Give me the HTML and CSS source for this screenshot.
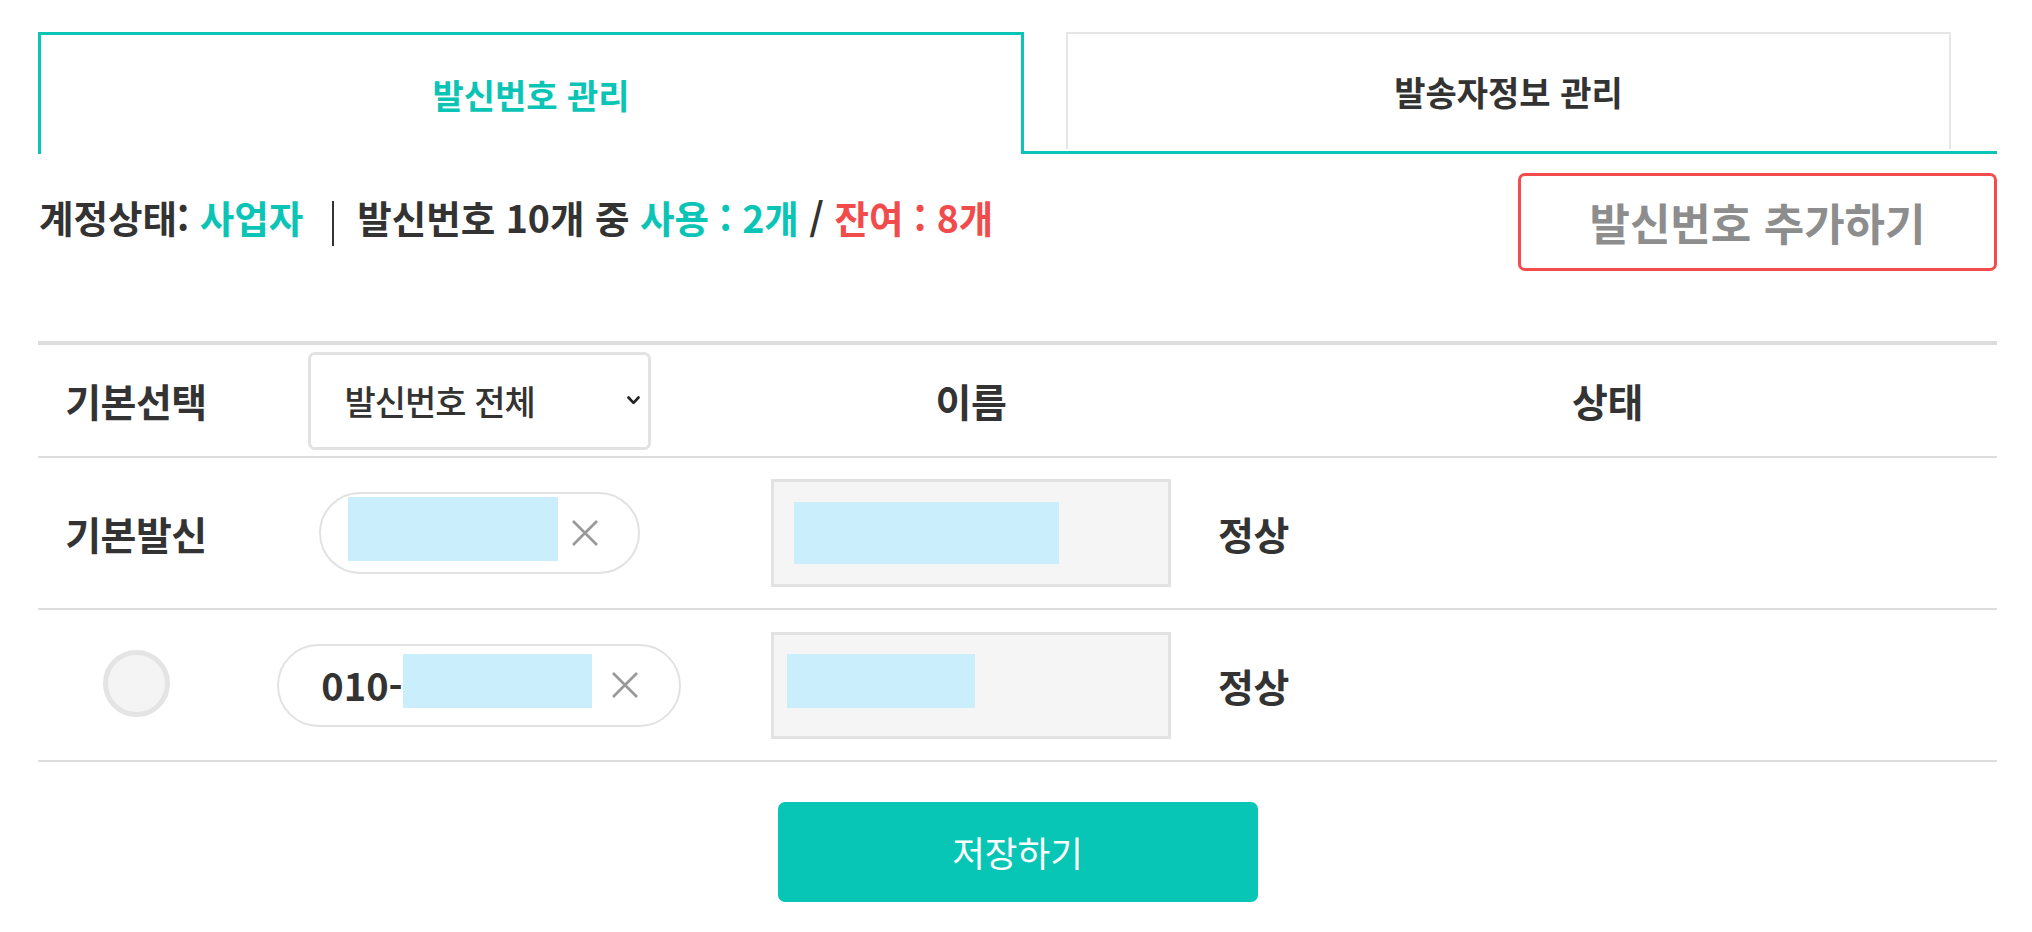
FILE: index.html
```html
<!DOCTYPE html>
<html lang="ko">
<head>
<meta charset="utf-8">
<title>발신번호 관리</title>
<link rel="stylesheet" href="styles.css">
</head>
<body>
<div class="page">
  <nav class="tabs">
    <a class="tab tab--active" href="#">발신번호 관리</a>
    <div class="tab-rest">
      <a class="tab tab--inactive" href="#">발송자정보 관리</a>
    </div>
  </nav>

  <div class="status-bar">
    <p class="status"><span>계정상태: </span><span class="teal">사업자</span><span class="sep"></span><span>발신번호 10개 중 </span><span class="teal">사용 : 2개</span><span> / </span><span class="red">잔여 : 8개</span></p>
    <button class="add-btn" type="button">발신번호 추가하기</button>
  </div>

  <div class="list">
    <div class="list-row list-row--head">
      <div class="cell"><span class="label">기본선택</span></div>
      <div class="cell">
        <div class="select-wrap">
          <select class="select"><option>발신번호 전체</option></select>
          <svg class="chevron" width="13" height="9" viewBox="0 0 13 9"><path d="M1.5 1.5 L6.5 6.8 L11.5 1.5" fill="none" stroke="#222" stroke-width="2.6" stroke-linecap="round" stroke-linejoin="round"/></svg>
        </div>
      </div>
      <div class="cell"><span class="label">이름</span></div>
      <div class="cell"><span class="label">상태</span></div>
    </div>

    <div class="list-row list-row--body">
      <div class="cell"><span class="label">기본발신</span></div>
      <div class="cell">
        <div class="pill pill--a">
          <span class="redact redact--pa" style="width:210px;height:64px"></span>
          <svg class="pill-x" width="28" height="28" viewBox="0 0 28 28"><path d="M2 2 L26 26 M26 2 L2 26" stroke="#999" stroke-width="2.7"/></svg>
        </div>
      </div>
      <div class="cell">
        <div class="name-box name-box--a"><span class="redact" style="width:265px;height:62px"></span></div>
      </div>
      <div class="cell cell--state"><span class="label">정상</span></div>
    </div>

    <div class="list-row list-row--body">
      <div class="cell"><input class="radio" type="radio" name="default"></div>
      <div class="cell">
        <div class="pill pill--b">
          <span class="phone">010-</span>
          <span class="redact redact--pb" style="width:189px;height:54px"></span>
          <svg class="pill-x pill-x--b" width="28" height="28" viewBox="0 0 28 28"><path d="M2 2 L26 26 M26 2 L2 26" stroke="#999" stroke-width="2.7"/></svg>
        </div>
      </div>
      <div class="cell">
        <div class="name-box name-box--b"><span class="redact" style="width:188px;height:54px"></span></div>
      </div>
      <div class="cell cell--state"><span class="label">정상</span></div>
    </div>
  </div>

  <button class="save-btn" type="button">저장하기</button>
</div>
</body>
</html>
```

FILE: styles.css
```css
* { box-sizing: border-box; }

html, body {
  margin: 0;
  padding: 0;
  background: #fff;
}

body {
  font-family: "Noto Sans CJK KR", "Noto Sans", sans-serif;
  color: #333;
}

.page {
  width: 1959px;
  margin-left: 38px;
  padding-top: 32px;
}

/* Tabs */
.tabs {
  display: flex;
  height: 122px;
}

.tab {
  display: flex;
  align-items: center;
  justify-content: center;
  font-size: 34px;
  font-weight: 700;
  letter-spacing: 0;
  line-height: 1;
  text-decoration: none;
}

.tab--active {
  width: 986px;
  border: 3px solid #0ac4b5;
  border-bottom: none;
  color: #0ac4b5;
}

.tab-rest {
  flex: 1;
  display: flex;
  border-bottom: 3px solid #0ac4b5;
  padding: 0 46px 2px 42px;
}

.tab--inactive {
  flex: 1;
  border: 2px solid #e6e6e6;
  border-bottom: none;
  color: #333;
}

/* Status bar */
.status-bar {
  display: flex;
  justify-content: space-between;
  align-items: center;
  height: 98px;
  margin-top: 19px;
}

.status {
  margin: 0 0 0 1px;
  font-size: 37.5px;
  font-weight: 700;
  letter-spacing: 0;
  line-height: 1;
  white-space: pre;
}

.teal { color: #0ac4b5; }
.red { color: #f24b4b; }

.sep {
  display: inline-block;
  width: 2px;
  height: 45px;
  background: #333;
  margin: 0 23px 0 29px;
  vertical-align: middle;
}

.add-btn {
  width: 479px;
  height: 98px;
  padding: 0;
  border: 3px solid #f44c4c;
  border-radius: 7px;
  background: #fff;
  color: #8d8d8d;
  font-family: "Noto Sans CJK KR", "Noto Sans", sans-serif;
  font-size: 44px;
  font-weight: 700;
  letter-spacing: 0;
  line-height: 1;
}

/* List */
.list {
  margin-top: 70px;
  border-top: 4px solid #dddddd;
}

.list-row {
  display: grid;
  grid-template-columns: 196px 490px 494px 1fr;
  align-items: center;
  border-bottom: 2px solid #dddddd;
}

.list-row--head { height: 113px; }
.list-row--body { height: 152px; }

.cell {
  display: flex;
  justify-content: center;
  align-items: center;
}

.cell--state { justify-content: flex-start; }

.label {
  font-size: 39px;
  font-weight: 700;
  letter-spacing: -0.5px;
  line-height: 1;
  color: #333;
}

/* Select */
.select-wrap {
  position: relative;
  width: 343px;
  height: 98px;
}

.select {
  -webkit-appearance: none;
  appearance: none;
  width: 100%;
  height: 100%;
  margin: 0;
  padding: 0 0 0 34px;
  border: 3px solid #e2e2e2;
  border-radius: 7px;
  background: #fff;
  color: #333;
  font-family: "Noto Sans CJK KR", "Noto Sans", sans-serif;
  font-size: 34px;
  font-weight: 500;
  letter-spacing: -1px;
}

.chevron {
  position: absolute;
  right: 11px;
  top: 44px;
}

/* Redacted blocks */
.redact {
  display: block;
  flex: none;
  background: #cbeefc;
}

/* Pills */
.pill {
  display: flex;
  align-items: center;
  height: 82px;
  border: 2px solid #e2e2e2;
  border-radius: 42px;
  background: #fff;
}

.pill--a { padding: 0 39px 0 27px; }
.redact--pa { align-self: flex-start; margin-top: 3px; }

.pill--b {
  height: 83px;
  padding: 0 40px 0 42px;
}
.redact--pb { align-self: flex-start; margin-top: 8px; }

.phone {
  font-size: 38px;
  font-weight: 700;
  letter-spacing: 0;
  line-height: 1;
  color: #333;
}

.pill-x {
  flex: none;
  margin-left: 13px;
}
.pill-x--b { margin-left: 19px; }

/* Name boxes */
.name-box {
  width: 400px;
  border: 3px solid #e2e2e2;
  background: #f5f5f5;
}

.name-box--a {
  height: 108px;
  padding: 20px 0 0 20px;
}

.name-box--b {
  height: 107px;
  padding: 19px 0 0 13px;
}

/* Radio */
.radio {
  -webkit-appearance: none;
  appearance: none;
  width: 67px;
  height: 67px;
  margin: 0 0 4px 0;
  border: 5px solid #e4e4e4;
  border-radius: 50%;
  background: #f4f4f4;
}

/* Save */
.save-btn {
  display: block;
  width: 480px;
  height: 100px;
  margin: 40px auto 0;
  padding: 0;
  border: none;
  border-radius: 7px;
  background: #08c6b6;
  color: #fff;
  font-family: "Noto Sans CJK KR", "Noto Sans", sans-serif;
  font-size: 35.5px;
  font-weight: 400;
  letter-spacing: 0;
  line-height: 1;
}
```
